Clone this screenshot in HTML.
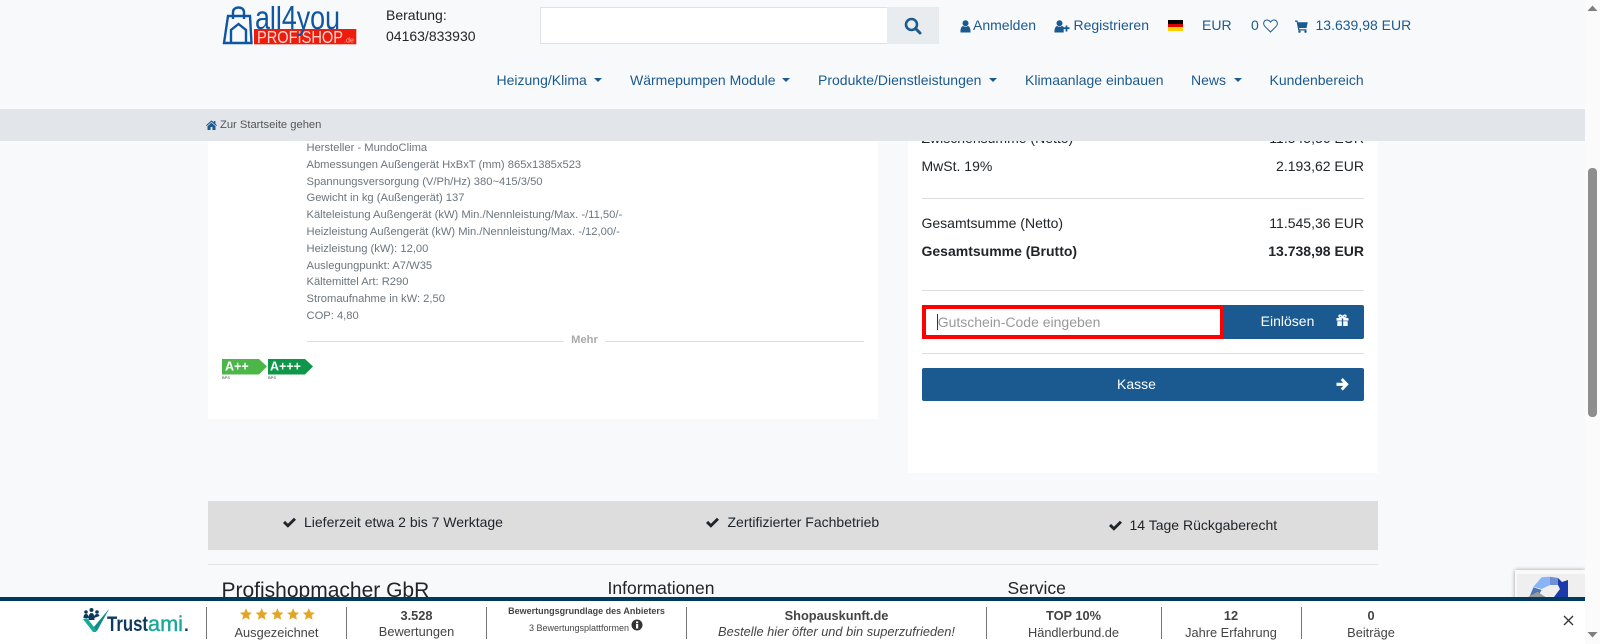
<!DOCTYPE html>
<html lang="de">
<head>
<meta charset="utf-8">
<title>Warenkorb</title>
<style>
html,body{margin:0;padding:0;width:1600px;height:644px;overflow:hidden;background:#f8f9fb;font-family:"Liberation Sans",Arial,sans-serif;font-size:14px;color:#212529}
.t{position:absolute;white-space:nowrap;line-height:20px}
.b{position:absolute}
.bl{color:#1b5a90}
.r{text-align:right}
.c{transform:translateX(-50%)}
.caret{position:absolute;width:0;height:0;border-left:4.2px solid transparent;border-right:4.2px solid transparent;border-top:4.2px solid #1b5a90;top:78px}
.spec{position:absolute;left:306.5px;top:140px;font-size:11.2px;line-height:16.8px;color:#6c757d;white-space:nowrap}
.sep{position:absolute;top:607px;height:32px;width:1px;background:#777}
.f1{position:absolute;white-space:nowrap;transform:translateX(-50%);font-size:12.8px;line-height:16px;color:#444;top:608px;font-weight:bold}
.f2{position:absolute;white-space:nowrap;transform:translateX(-50%);font-size:12.8px;line-height:16px;color:#444;top:625px}
svg{position:absolute;display:block}
</style>
</head>
<body>

<!-- page content -->
<div class="b" style="left:208px;top:130px;width:669.5px;height:289px;background:#fff"></div>
<div class="b" style="left:908px;top:130px;width:470px;height:342.5px;background:#fff"></div>

<div class="spec">Hersteller - MundoClima<br>Abmessungen Außengerät HxBxT (mm) 865x1385x523<br>Spannungsversorgung (V/Ph/Hz) 380~415/3/50<br>Gewicht in kg (Außengerät) 137<br>Kälteleistung Außengerät (kW) Min./Nennleistung/Max. -/11,50/-<br>Heizleistung Außengerät (kW) Min./Nennleistung/Max. -/12,00/-<br>Heizleistung (kW): 12,00<br>Auslegungpunkt: A7/W35<br>Kältemittel Art: R290<br>Stromaufnahme in kW: 2,50<br>COP: 4,80</div>

<div class="b" style="left:307px;top:341px;width:557px;height:1px;background:#ddd"></div>
<div class="t c" style="left:584.5px;top:330px;font-size:11.2px;font-weight:bold;color:#aaa;background:#fff;padding:0 8px">Mehr</div>

<svg style="left:222px;top:358px" width="92" height="22" viewBox="0 0 92 22">
<polygon points="0,1 37,1 45,8.5 37,16.500 0,16.500" fill="#4cb748"/>
<polygon points="46,1 83,1 91,8.5 83,16.500 46,16.500" fill="#0f9648"/>
<text x="3" y="12.5" font-family="Liberation Sans" font-weight="bold" font-size="12.500" fill="#fff">A++</text>
<text x="48" y="12.5" font-family="Liberation Sans" font-weight="bold" font-size="12.500" fill="#fff">A+++</text>
<text x="0" y="21" font-family="Liberation Sans" font-size="4" fill="#444">BPS</text>
<text x="46" y="21" font-family="Liberation Sans" font-size="4" fill="#444">BPS</text>
</svg>

<!-- totals -->
<div class="t" style="left:921.5px;top:128px">Zwischensumme (Netto)</div>
<div class="t r" style="right:236px;top:128px">11.545,36 EUR</div>
<div class="t" style="left:921.5px;top:156px">MwSt. 19%</div>
<div class="t r" style="right:236px;top:156px">2.193,62 EUR</div>
<div class="b" style="left:922px;top:198px;width:442px;height:1px;background:#ddd"></div>
<div class="t" style="left:921.5px;top:213px">Gesamtsumme (Netto)</div>
<div class="t r" style="right:236px;top:213px">11.545,36 EUR</div>
<div class="t" style="left:921.5px;top:241px;font-weight:bold">Gesamtsumme (Brutto)</div>
<div class="t r" style="right:236px;top:241px;font-weight:bold">13.738,98 EUR</div>
<div class="b" style="left:922px;top:290px;width:442px;height:1px;background:#ddd"></div>

<div class="b" style="left:922px;top:305px;width:302px;height:34px;box-sizing:border-box;border:4.7px solid #f00;background:#fff"></div>
<div class="b" style="left:937px;top:314px;width:1px;height:16px;background:#333"></div>
<div class="t" style="left:937.7px;top:312px;color:#999">Gutschein-Code eingeben</div>
<div class="b" style="left:1224px;top:305px;width:140px;height:34px;background:#1b5a90;border-radius:0 2px 2px 0"></div>
<div class="t c" style="left:1287.500px;top:311px;color:#fff">Einlösen</div>
<svg style="left:1336px;top:314px" width="13" height="12" viewBox="0 0 13 12"><path d="M.5 4h5.300v2.600H.5zM7.200 4h5.300v2.600H7.200zM1.300 7.300h4.500V12H1.300zM7.200 7.300h4.500V12H7.200z" fill="#fff"/><path d="M6.500 3.700C5 3.700 3 3.300 3 2 3 .6 5.700.6 6.500 3.700zM6.500 3.700C8 3.700 10 3.300 10 2 10 .6 7.300.6 6.500 3.700z" fill="none" stroke="#fff" stroke-width="1.400"/></svg>
<div class="b" style="left:922px;top:353px;width:442px;height:1px;background:#ddd"></div>
<div class="b" style="left:922px;top:368px;width:442px;height:33px;background:#1b5a90;border-radius:2px"></div>
<div class="t c" style="left:1136.5px;top:374px;color:#fff">Kasse</div>
<svg style="left:1336px;top:378px" width="13" height="13" viewBox="0 0 13 13"><path d="M.5 4.700h6.800L4.700 2.100 6.700 0l6 6.300-6 6.300-2-2.100 2.600-2.600H.5z" fill="#fff"/></svg>

<!-- trust strip -->
<div class="b" style="left:208px;top:501px;width:1170px;height:49px;background:#ddd"></div>
<svg style="left:282.500px;top:515.500px" width="13" height="13" viewBox="0 0 13 13"><path d="M0 7 2.100 4.900 4.900 7.700 10.900 1.700 13 3.800 4.900 11.700z" fill="#212529"/></svg>
<div class="t" style="left:304px;top:512px">Lieferzeit etwa 2 bis 7 Werktage</div>
<svg style="left:706px;top:515.500px" width="13" height="13" viewBox="0 0 13 13"><path d="M0 7 2.100 4.900 4.900 7.700 10.900 1.700 13 3.800 4.900 11.700z" fill="#212529"/></svg>
<div class="t" style="left:727.5px;top:512px">Zertifizierter Fachbetrieb</div>
<svg style="left:1108.500px;top:518.500px" width="13" height="13" viewBox="0 0 13 13"><path d="M0 7 2.100 4.900 4.900 7.700 10.900 1.700 13 3.800 4.900 11.700z" fill="#212529"/></svg>
<div class="t" style="left:1129.500px;top:515px">14 Tage Rückgaberecht</div>
<div class="b" style="left:208px;top:564px;width:1170px;height:1px;background:#e3e4e6"></div>

<div class="t" style="left:221.500px;top:578px;font-size:21px;line-height:25px">Profishopmacher GbR</div>
<div class="t" style="left:607.500px;top:578px;font-size:17.500px;line-height:21px">Informationen</div>
<div class="t" style="left:1007.500px;top:578px;font-size:17.500px;line-height:21px">Service</div>

<!-- recaptcha -->
<div class="b" style="left:1515px;top:570px;width:70px;height:30px;background:#f9f9f9;box-shadow:0 0 4px #999"></div>
<div class="b" style="left:1517px;top:574px;width:68px;height:26px;background:#efefef"></div>
<svg style="left:1525px;top:575px" width="60" height="22" viewBox="0 0 60 22">
<polygon points="8.500,11.700 16.600,2.300 25,1.700 25,10 16.600,14" fill="#8ab4f8"/>
<polygon points="25,1.700 33,3 33,10 25,10" fill="#6f8fd6"/>
<polygon points="33,3 37,7 43,5 43,22 29,22 35,14 33,10" fill="#1c3aa9"/>
<polygon points="4.400,22 8.500,12.300 16.600,15 12.500,22" fill="#4a76b8"/>
<polygon points="3,22 12.500,16.700 20.600,22" fill="#9a9a9a"/>
</svg>

<!-- bottom trust bar -->
<div class="b" style="left:0;top:597px;width:1585px;height:47px;background:#fff"></div>
<div class="b" style="left:0;top:597px;width:1585px;height:4px;background:#003a5f"></div>

<svg style="left:82px;top:607px" width="112" height="27" viewBox="0 0 112 27">
<path d="M1 12 5 11 12 20 27 2 14 25H11z" fill="#1aa898"/>
<path d="M12 20 27 2 15 24z" fill="#0f8a8a"/>
<circle cx="4" cy="5" r="1.800" fill="#0f3a5f"/><circle cx="9.500" cy="3" r="2" fill="#0f3a5f"/><circle cx="15" cy="5" r="1.800" fill="#0f3a5f"/>
<path d="M1.500 11c0-3 1-4 2.500-4s2.500 1 3 4zM6.500 13c0-5 1-7 3-7s3 2 3 7zM12 11c0-3 1.500-4 3-4s2.500 1 2.500 2z" fill="#0f3a5f"/>
<text x="25" y="24" font-family="Liberation Sans" font-weight="bold" font-size="21" textLength="41" lengthAdjust="spacingAndGlyphs" fill="#0f3a5f">Trust</text>
<text x="66" y="24" font-family="Liberation Sans" font-size="21" stroke="#1aa898" stroke-width=".4" textLength="35" lengthAdjust="spacingAndGlyphs" fill="#1aa898">ami</text>
<text x="102" y="24" font-family="Liberation Sans" font-weight="bold" font-size="17" fill="#0f3a5f">.</text>
</svg>

<div class="sep" style="left:206px"></div>
<div class="sep" style="left:346px"></div>
<div class="sep" style="left:486px"></div>
<div class="sep" style="left:686px"></div>
<div class="sep" style="left:986px"></div>
<div class="sep" style="left:1161px"></div>
<div class="sep" style="left:1301px"></div>

<svg style="left:239.500px;top:608px" width="76" height="14" viewBox="0 0 76 14">
<g fill="#e2a526">
<polygon points="6,.3 7.800,4.300 12,4.700 8.800,7.500 9.800,11.800 6,9.500 2.200,11.800 3.200,7.500 0,4.700 4.200,4.300"/>
<polygon transform="translate(15.700,0)" points="6,.3 7.800,4.300 12,4.700 8.800,7.500 9.800,11.800 6,9.500 2.200,11.800 3.200,7.500 0,4.700 4.200,4.300"/>
<polygon transform="translate(31.400,0)" points="6,.3 7.800,4.300 12,4.700 8.800,7.500 9.800,11.800 6,9.500 2.200,11.800 3.200,7.500 0,4.700 4.200,4.300"/>
<polygon transform="translate(47.100,0)" points="6,.3 7.800,4.300 12,4.700 8.800,7.500 9.800,11.800 6,9.500 2.200,11.800 3.200,7.500 0,4.700 4.200,4.300"/>
<polygon transform="translate(62.800,0)" points="6,.3 7.800,4.300 12,4.700 8.800,7.500 9.800,11.800 6,9.500 2.200,11.800 3.200,7.500 0,4.700 4.200,4.300"/>
</g></svg>
<div class="f2" style="left:276.500px">Ausgezeichnet</div>
<div class="f1" style="left:416.500px">3.528</div>
<div class="f2" style="left:416.500px;top:624px">Bewertungen</div>
<div class="f1" style="left:586.500px;top:603px;font-size:9px">Bewertungsgrundlage des Anbieters</div>
<div class="f2" style="left:579px;top:620px;font-size:9px">3 Bewertungsplattformen</div>
<svg style="left:631px;top:619px" width="12" height="12" viewBox="0 0 12 12"><circle cx="6" cy="6" r="5.500" fill="#333"/><rect x="5" y="5" width="2.200" height="4.500" fill="#fff"/><rect x="5" y="2.400" width="2.200" height="1.800" fill="#fff"/></svg>
<div class="f1" style="left:836.500px">Shopauskunft.de</div>
<div class="f2" style="left:836.500px;font-style:italic;top:624px">Bestelle hier öfter und bin superzufrieden!</div>
<div class="f1" style="left:1073.500px">TOP 10%</div>
<div class="f2" style="left:1073.500px">Händlerbund.de</div>
<div class="f1" style="left:1231px">12</div>
<div class="f2" style="left:1231px">Jahre Erfahrung</div>
<div class="f1" style="left:1371px">0</div>
<div class="f2" style="left:1371px">Beiträge</div>
<svg style="left:1563px;top:615px" width="11" height="11" viewBox="0 0 11 11"><path d="M1 1l9 9M10 1l-9 9" stroke="#333" stroke-width="1.300" fill="none"/></svg>

<!-- breadcrumb bar and header -->
<div class="b" style="left:0;top:0;width:1585px;height:109px;background:#f8f9fb"></div>
<div class="b" style="left:0;top:109px;width:1585px;height:32px;background:#e2e5ea"></div>
<svg style="left:206px;top:120px" width="11" height="10" viewBox="0 0 11 10"><path d="M0 5.200 5.500 .4 7.800 2.400V1H9.400V3.800L11 5.200 10.300 6 5.500 1.900.7 6zM1.500 6.200 5.500 2.800 9.500 6.200V10H6.500V7H4.500V10H1.500z" fill="#1b5a90"/></svg>
<div class="t" style="left:220px;top:115px;font-size:11.200px;color:#555">Zur Startseite gehen</div>

<!-- logo -->
<svg style="left:222px;top:6px" width="136" height="40" viewBox="0 0 136 40">
<rect x="32" y="23" width="102.300" height="15.300" fill="#ee1c0c"/>
<text x="35" y="37" font-family="Liberation Sans" font-size="17.500" textLength="86" lengthAdjust="spacingAndGlyphs" fill="#ffd9d2">PROFISHOP</text>
<text x="122" y="36.500" font-family="Liberation Sans" font-size="7" textLength="10" lengthAdjust="spacingAndGlyphs" fill="#f9b9a9">.de</text>
<text x="33" y="23" font-family="Liberation Sans" font-size="33" textLength="85" lengthAdjust="spacingAndGlyphs" fill="#0f56a0">all4you</text>
<g fill="none" stroke="#0f56a0" stroke-width="2.400">
<path d="M6 10h22l1.500 27H2z"/>
<path d="M11 13V6c0-6 11-6 11 0v7"/>
<path d="M9 37V24l7.500-6 7.500 6v13"/>
</g>
</svg>

<div class="t" style="left:386px;top:5px;line-height:21px;white-space:normal;width:110px">Beratung:<br>04163/833930</div>

<div class="b" style="left:540px;top:7px;width:348px;height:37px;box-sizing:border-box;background:#fff;border:1px solid #dee2e6"></div>
<div class="b" style="left:887px;top:7px;width:52px;height:37px;background:#e9ecef"></div>
<svg style="left:904px;top:17px" width="18" height="18" viewBox="0 0 18 18"><circle cx="7.500" cy="7.500" r="5.500" fill="none" stroke="#1b5a90" stroke-width="2.600"/><path d="M11.500 11.500 16 16" stroke="#1b5a90" stroke-width="3" stroke-linecap="round"/></svg>

<svg style="left:960px;top:19.500px" width="11" height="13" viewBox="0 0 11 13"><circle cx="5.500" cy="3.300" r="3" fill="#1b5a90"/><path d="M.5 12.500C.2 8 1.800 6 3.300 6c1.300 1 3.100 1 4.400 0 1.500 0 3.100 2 2.800 6.500z" fill="#1b5a90"/></svg>
<div class="t bl" style="left:973px;top:15px">Anmelden</div>
<svg style="left:1053.500px;top:19.500px" width="16" height="13" viewBox="0 0 16 13"><circle cx="5.500" cy="3.300" r="3" fill="#1b5a90"/><path d="M.5 12.500C.2 8 1.800 6 3.300 6c1.300 1 3.100 1 4.400 0 .8 0 1.500.4 2 1.200V12.500z" fill="#1b5a90"/><path d="M9.500 8.200h6M12.500 5.500v6" stroke="#1b5a90" stroke-width="1.800"/></svg>
<div class="t bl" style="left:1073.500px;top:15px">Registrieren</div>
<div class="b" style="left:1167.500px;top:20px;width:15px;height:3.700px;background:#000"></div>
<div class="b" style="left:1167.500px;top:23.700px;width:15px;height:3.700px;background:#d00"></div>
<div class="b" style="left:1167.500px;top:27.400px;width:15px;height:3.700px;background:#ffce00"></div>
<div class="t bl" style="left:1202px;top:15px">EUR</div>
<div class="t bl" style="left:1251px;top:15px">0</div>
<svg style="left:1262.500px;top:19px" width="15" height="14" viewBox="0 0 15 14"><path d="M7.500 13 1.800 7.300C-.5 4.800 1 1 4 1c1.600 0 2.700 1 3.500 2.100C8.300 2 9.400 1 11 1c3 0 4.500 3.800 2.200 6.300z" fill="none" stroke="#1b5a90" stroke-width="1"/></svg>
<svg style="left:1295px;top:20px" width="13" height="13" viewBox="0 0 13 13"><path d="M0 .5h2.500L3 2.300h9.700L11.500 8H4.200l.3 1.300h7V10.500H3.300L1.600 1.700H0z" fill="#1b5a90"/><circle cx="4.500" cy="11.700" r="1.200" fill="#1b5a90"/><circle cx="10.500" cy="11.700" r="1.200" fill="#1b5a90"/></svg>
<div class="t bl" style="left:1315.500px;top:15px">13.639,98 EUR</div>

<div class="t bl" style="left:496.500px;top:70px">Heizung/Klima</div><div class="caret" style="left:593.500px"></div>
<div class="t bl" style="left:630px;top:70px">Wärmepumpen Module</div><div class="caret" style="left:782px"></div>
<div class="t bl" style="left:818px;top:70px">Produkte/Dienstleistungen</div><div class="caret" style="left:989px"></div>
<div class="t bl" style="left:1025px;top:70px">Klimaanlage einbauen</div>
<div class="t bl" style="left:1191px;top:70px">News</div><div class="caret" style="left:1233.500px"></div>
<div class="t bl" style="left:1269.500px;top:70px">Kundenbereich</div>

<!-- scrollbar -->
<div class="b" style="left:1585px;top:0;width:15px;height:644px;background:#fbfbfb"></div>
<svg style="left:1587px;top:5px" width="11" height="7" viewBox="0 0 11 7"><polygon points="5.500,.5 10.500,6 .5,6" fill="#808080"/></svg>
<div class="b" style="left:1588px;top:168px;width:9px;height:249px;background:#8e8e8e;border-radius:4px"></div>
<svg style="left:1587px;top:631px" width="11" height="7" viewBox="0 0 11 7"><polygon points=".5,1 10.500,1 5.500,6.500" fill="#808080"/></svg>

</body>
</html>
